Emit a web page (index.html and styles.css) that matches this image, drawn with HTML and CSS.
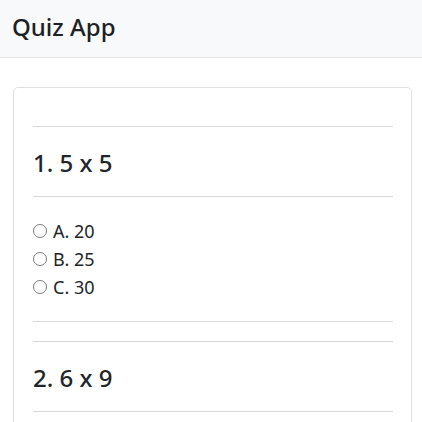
FILE: index.html
```html
<!DOCTYPE html>
<html lang="en">
<head>
<meta charset="utf-8">
<title>Quiz App</title>
<link rel="stylesheet" href="styles.css">
</head>
<body>
<nav class="navbar">
  <span class="brand">Quiz App</span>
</nav>
<main class="page">
  <section class="card">
    <div class="question">
      <div class="rule"></div>
      <h2 class="q-title">1. 5 x 5</h2>
      <div class="rule"></div>
      <div class="options">
        <label class="option"><span class="radio"></span><span>A. 20</span></label>
        <label class="option"><span class="radio"></span><span>B. 25</span></label>
        <label class="option"><span class="radio"></span><span>C. 30</span></label>
      </div>
      <div class="rule"></div>
    </div>
    <div class="question">
      <div class="rule"></div>
      <h2 class="q-title">2. 6 x 9</h2>
      <div class="rule"></div>
    </div>
  </section>
</main>
</body>
</html>
```

FILE: styles.css
```css
html, body {
  margin: 0;
  padding: 0;
  background: #fff;
  color: #212529;
  font-family: "Noto Sans", "Open Sans", "Liberation Sans", sans-serif;
}

.navbar {
  background: #f8f9fa;
  border-bottom: 1px solid #e3e5e7;
  padding: 11px 12px 14px;
}

.brand {
  display: block;
  font-size: 24px;
  line-height: 32px;
  font-weight: 500;
  color: #1d2124;
}

.page {
  padding: 29px 10px 0 13px;
}

.card {
  border: 1px solid #e0e0e0;
  border-radius: 5px;
  padding: 38px 18px 60px 19px;
  background: #fff;
}

.rule {
  border-top: 1px solid #d8d8d8;
}

.q-title {
  margin: 21px 0 19px;
  font-size: 24px;
  line-height: 29px;
  font-weight: 500;
}

.options {
  display: flex;
  flex-direction: column;
  margin: 20px 0;
}

.option {
  display: flex;
  align-items: center;
  height: 28px;
  font-size: 18px;
  line-height: 28px;
}

.radio {
  box-sizing: border-box;
  flex: none;
  width: 14px;
  height: 14px;
  margin: 0 6px 0 0;
  border: 1.4px solid #7a7a7a;
  border-radius: 50%;
  background: #fff;
}

.question + .question {
  margin-top: 19px;
}
```
